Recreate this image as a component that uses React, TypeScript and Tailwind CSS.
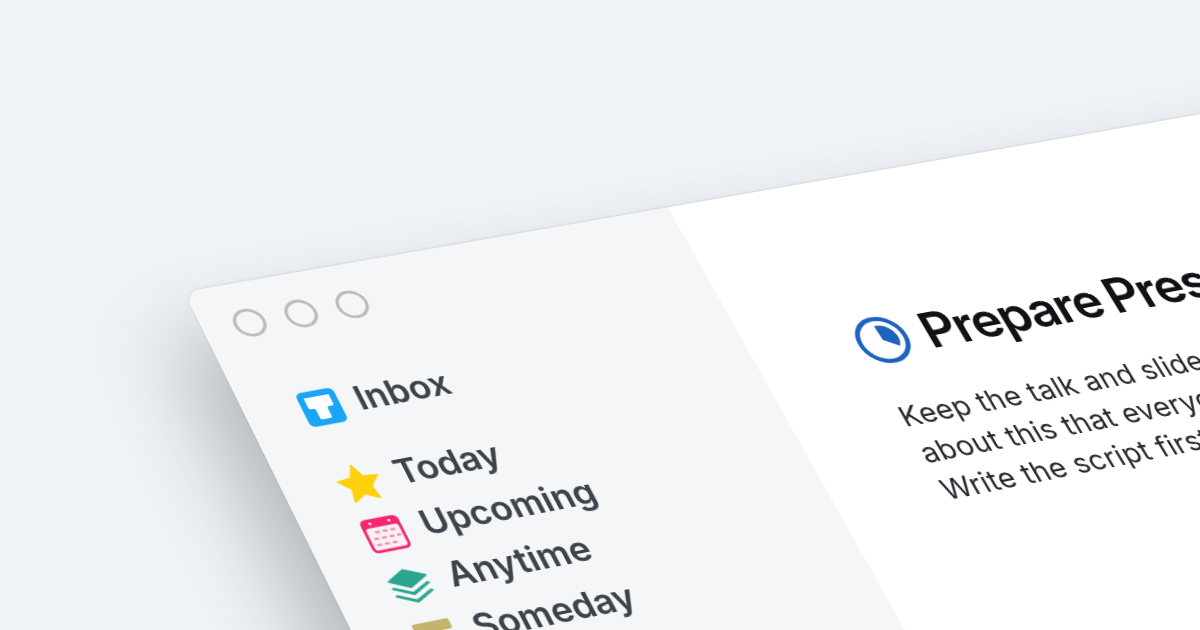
const InboxIcon = () => (
  <svg width="38" height="38" viewBox="0 0 44 44">
    <rect x="1" y="1" width="42" height="42" rx="6" fill="#1ba6f5" />
    <path d="M8 8h28v11q0 3-3 3h-3q-2 0-2 2v10q0 2-2 2H17q-2 0-2-2V24q0-2-2-2h-2q-3 0-3-3z" fill="#ffffff" />
  </svg>
);

const StarIcon = () => (
  <svg width="42" height="42" viewBox="0 0 48 48">
    <path
      d="M24 3l6.5 14 15 1.8-11 10.4 3 15L24 36.8 10.500 44.200l3-15L2.500 18.800l15-1.800z"
      fill="#ffd10a"
      stroke="#ffd10a"
      strokeWidth="2"
      strokeLinejoin="round"
    />
  </svg>
);

const CalendarIcon = () => (
  <svg width="40" height="40" viewBox="0 0 44 44">
    <rect x="2" y="3" width="40" height="38" rx="6" fill="#f5266f" />
    <rect x="5" y="13" width="34" height="25" rx="3" fill="#fdf0f5" />
    <circle cx="12" cy="8" r="1.500" fill="#fdf0f5" />
    <circle cx="32" cy="8" r="1.500" fill="#fdf0f5" />
    <g fill="#ee8fb0">
      <rect x="13" y="17" width="5" height="2.500" />
      <rect x="21" y="17" width="5" height="2.500" />
      <rect x="29" y="17" width="5" height="2.500" />
      <rect x="9" y="24" width="5" height="2.500" />
      <rect x="17" y="24" width="5" height="2.500" />
      <rect x="25" y="24" width="5" height="2.500" />
      <rect x="33" y="24" width="4" height="2.500" />
      <rect x="9" y="31" width="5" height="2.500" />
      <rect x="17" y="31" width="5" height="2.500" />
      <rect x="25" y="31" width="5" height="2.500" />
    </g>
  </svg>
);

const LayersIcon = () => (
  <svg width="42" height="38" viewBox="0 0 48 44">
    <path d="M24 2l20 10q2 1 0 2L24 24q-1 .5-2 0L3 14q-2-1 0-2L22 2q1-.5 2 0z" fill="#2ba58f" />
    <path d="M5 20l18 9 19-9 3 2-22 11L2 22z" fill="#2ba58f" />
    <path d="M5 29l18 9 19-9 3 2-22 11L2 31z" fill="#2ba58f" />
  </svg>
);

const SomedayIcon = () => (
  <svg width="38" height="38" viewBox="0 0 44 44">
    <rect x="2" y="2" width="40" height="12" rx="2" fill="#c5b36b" />
    <rect x="5" y="17" width="34" height="24" rx="2" fill="#c5b36b" />
    <rect x="15" y="21" width="14" height="3" fill="#f4f6f8" />
  </svg>
);

const ClockIcon = () => (
  <svg width="52" height="52" viewBox="0 0 56 56">
    <circle cx="28" cy="28" r="25" fill="none" stroke="#1f63c0" strokeWidth="5" />
    <path d="M28 28L27 11A17 17 0 0 1 42 38z" fill="#1f63c0" />
  </svg>
);

const navRowClass =
  "flex items-center gap-[13px] h-[54px] text-[34px] leading-[50px] font-semibold text-[#3d424b] tracking-[-0.1px]";
const iconSlotClass = "flex w-[42px] items-center justify-center";
const dotClass = "h-[30px] w-[30px] rounded-full border-[3px] border-[#b9bbbd]";
const listLabelClass = "ml-[2px] -translate-y-[3px]";

const App = () => {
  return (
    <div className="h-[630px] w-[1200px] overflow-hidden bg-[#f1f4f7] font-['Inter',sans-serif]">
      <div className="flex h-[900px] w-[1500px] origin-top-left overflow-hidden rounded-tl-[16px] bg-white shadow-[-30px_50px_90px_rgba(70,80,90,0.4),0_-1px_3px_rgba(120,130,140,0.18)] [transform:matrix3d(1.0472,-0.16029,0,0.0000707,0.42367,0.86753,0,-0.0001133,0,0,1,0,184,292,0,1)]">
        <div className="flex w-[484px] shrink-0 flex-col bg-[#f4f6f8] pl-[30px] pt-[28px]">
          <div className="flex gap-[20px]">
            <div className={dotClass} />
            <div className={dotClass} />
            <div className={dotClass} />
          </div>
          <div className="ml-[20px] mt-[56px] flex flex-col">
            <div className={navRowClass}>
              <span className={iconSlotClass}>
                <InboxIcon />
              </span>
              <span className="-translate-y-[2px]">Inbox</span>
            </div>
            <div className="mt-[27px] flex flex-col">
              <div className={navRowClass}>
                <span className={iconSlotClass}>
                  <StarIcon />
                </span>
                <span className={listLabelClass}>Today</span>
              </div>
              <div className={navRowClass}>
                <span className={iconSlotClass}>
                  <CalendarIcon />
                </span>
                <span className={listLabelClass}>Upcoming</span>
              </div>
              <div className={navRowClass}>
                <span className={iconSlotClass}>
                  <LayersIcon />
                </span>
                <span className={listLabelClass}>Anytime</span>
              </div>
              <div className={navRowClass}>
                <span className={iconSlotClass}>
                  <SomedayIcon />
                </span>
                <span className={listLabelClass}>Someday</span>
              </div>
            </div>
          </div>
        </div>
        <div className="flex flex-col pl-[105px] pt-[139px]">
          <div className="flex items-center gap-[16px] whitespace-nowrap text-[52px] font-semibold tracking-[-1.5px] text-[#111215] [word-spacing:-3px]">
            <ClockIcon />
            Prepare Presentation
          </div>
          <div className="ml-[1px] mt-[23px] flex flex-col whitespace-nowrap text-[29px] leading-[40px] tracking-[0.3px] text-[#26292e]">
            <span>Keep the talk and slides simple</span>
            <span>about this that everyone</span>
            <span>Write the script first</span>
          </div>
        </div>
      </div>
    </div>
  );
};

export default App;
